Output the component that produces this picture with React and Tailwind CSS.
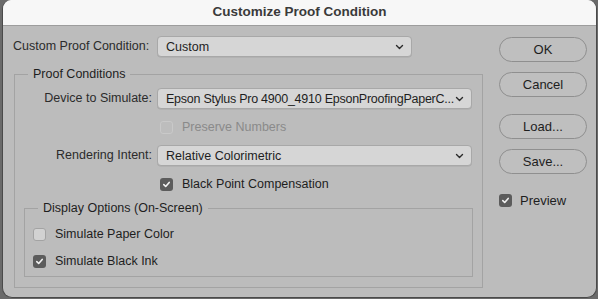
import React from "react";

function Chevron() {
  return (
    <svg width="9" height="6" viewBox="0 0 9 6" className="shrink-0">
      <path d="M1.5 1.5 L4.5 4.5 L7.5 1.5" fill="none" stroke="#2a2a2a" strokeWidth="1.4" strokeLinecap="round" strokeLinejoin="round" />
    </svg>
  );
}

function Select({ value, width, tight }) {
  return (
    <div
      className={`h-[21px] ${width} flex items-center justify-between pl-[8px] pr-[7px] rounded-[4px] bg-[#d6d6d6] border border-[#a8a8a8] shadow-[0_0.5px_0_rgba(0,0,0,0.1)] text-[12.5px] text-[#1e1e1e] leading-[16px]`}
    >
      <span className={`whitespace-nowrap ${tight ? "tracking-[-0.25px]" : ""}`}>{value}</span>
      <Chevron />
    </div>
  );
}

function Check({ checked, disabled }) {
  if (checked) {
    return (
      <div className="w-[13px] h-[13px] rounded-[3px] bg-[#5c5c5c] flex items-center justify-center shrink-0">
        <svg width="9" height="9" viewBox="0 0 9 9">
          <path d="M1.8 4.6 L3.7 6.5 L7.2 2.4" fill="none" stroke="#f2f2f2" strokeWidth="1.6" strokeLinecap="round" strokeLinejoin="round" />
        </svg>
      </div>
    );
  }
  if (disabled) {
    return <div className="w-[13px] h-[13px] rounded-[3px] border border-[#c9c9c9] bg-[#bdbdbd] shrink-0" />;
  }
  return <div className="w-[13px] h-[13px] rounded-[3px] border border-[#a3a3a3] bg-[#d2d2d2] shrink-0" />;
}

function Button({ children }) {
  return (
    <div className="w-[88px] h-[25px] rounded-full border border-[#8f8f8f] bg-[#bfbfbf] flex items-center justify-center text-[13px] text-[#1e1e1e]">
      {children}
    </div>
  );
}

export default function App() {
  return (
    <div
      className="w-[598px] h-[299px] bg-[#6a6a6a] pl-[2px] pr-[1px] pb-[1px]"
      style={{ fontFamily: "'Liberation Sans', Arial, sans-serif" }}
    >
      <div className="w-full h-full rounded-[10px] rounded-t-[9px] border border-[#4a4a4a] border-t-0 overflow-hidden bg-[#bcbcbc] flex flex-col">
        <div className="h-[26px] shrink-0 bg-[#f7f7f7] border-b border-[#9d9d9d] flex items-center justify-center text-[13.5px] font-bold text-[#3a3a3a]">
          Customize Proof Condition
        </div>
        <div className="flex flex-1 text-[12.5px]">
          {/* Left column */}
          <div className="w-[481px] pl-[10px] flex flex-col">
            <div className="mt-[10px] flex items-center h-[21px]">
              <div className="w-[144px] text-[#2b2b2b] whitespace-nowrap">Custom Proof Condition:</div>
              <Select value="Custom" width="w-[255px]" />
            </div>
            <fieldset className="mt-[10px] ml-[1px] w-[469px] h-[221px] border border-[#a3a3a3] flex flex-col">
              <legend className="ml-[13px] px-[5px] text-[#1e1e1e] leading-[15px]">Proof Conditions</legend>
              <div className="mt-[6px] flex items-center h-[21px]">
                <div className="w-[137px] text-right text-[#2b2b2b] whitespace-nowrap">Device to Simulate:</div>
                <div className="ml-[5px]">
                  <Select value="Epson Stylus Pro 4900_4910 EpsonProofingPaperC..." width="w-[315px]" tight />
                </div>
              </div>
              <div className="mt-[11px] flex items-center h-[14px] pl-[145px]">
                <Check disabled />
                <span className="ml-[9px] text-[#8a8a8a]">Preserve Numbers</span>
              </div>
              <div className="mt-[11px] flex items-center h-[21px]">
                <div className="w-[137px] text-right text-[#2b2b2b] whitespace-nowrap">Rendering Intent:</div>
                <div className="ml-[5px]">
                  <Select value="Relative Colorimetric" width="w-[315px]" />
                </div>
              </div>
              <div className="mt-[11px] flex items-center h-[14px] pl-[145px]">
                <Check checked />
                <span className="ml-[9px] text-[#1e1e1e]">Black Point Compensation</span>
              </div>
              <fieldset className="mt-[10px] ml-[9px] w-[449px] h-[76px] border border-[#a3a3a3] flex flex-col">
                <legend className="ml-[13px] px-[5px] text-[#1e1e1e] leading-[15px]">Display Options (On-Screen)</legend>
                <div className="mt-[11px] flex items-center h-[14px] pl-[8px]">
                  <Check />
                  <span className="ml-[9px] text-[#1e1e1e]">Simulate Paper Color</span>
                </div>
                <div className="mt-[13px] flex items-center h-[14px] pl-[8px]">
                  <Check checked />
                  <span className="ml-[9px] text-[#1e1e1e]">Simulate Black Ink</span>
                </div>
              </fieldset>
            </fieldset>
          </div>
          {/* Right column */}
          <div className="ml-[15px] flex flex-col">
            <div className="mt-[11px]"><Button>OK</Button></div>
            <div className="mt-[10px]"><Button>Cancel</Button></div>
            <div className="mt-[17px]"><Button>Load...</Button></div>
            <div className="mt-[10px]"><Button>Save...</Button></div>
            <div className="mt-[17px] flex items-center">
              <Check checked />
              <span className="ml-[8px] text-[13px] text-[#1e1e1e]">Preview</span>
            </div>
          </div>
        </div>
      </div>
    </div>
  );
}
